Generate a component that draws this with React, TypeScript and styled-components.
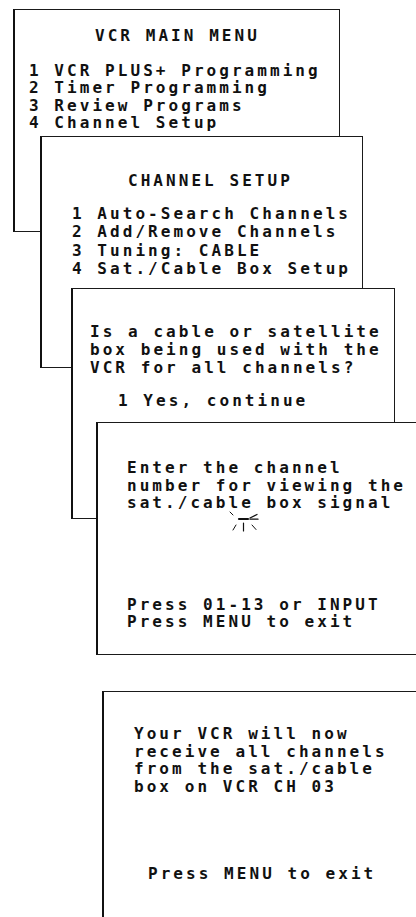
import React from "react";
import styled, { createGlobalStyle } from "styled-components";

const Global = createGlobalStyle`
  html, body { margin: 0; padding: 0; background: #ffffff; }
  body { overflow: hidden; width: 416px; height: 917px; }
`;

const Page = styled.div`
  display: flex;
  flex-direction: column;
  align-items: flex-start;
  width: 416px;
  height: 917px;
  padding-top: 9px;
  box-sizing: border-box;
  overflow: hidden;
  background: #fff;
  font-family: "DejaVu Sans Mono", "Liberation Mono", monospace;
  font-weight: bold;
  font-size: 16px;
  letter-spacing: 3.05px;
  color: #111;
`;

const Screen = styled.section<{
  $left: number;
  $shift: number;
  $w: number;
  $h: number;
  $padTop: number;
  $padLeft: number;
  $lh: number;
}>`
  position: relative;
  z-index: 1;
  flex: none;
  box-sizing: border-box;
  margin-left: ${(p) => p.$left}px;
  margin-top: ${(p) => p.$shift}px;
  width: ${(p) => p.$w}px;
  height: ${(p) => p.$h}px;
  padding: ${(p) => p.$padTop}px 0 0 ${(p) => p.$padLeft}px;
  background: #fff;
  border: 1px solid #1a1a1a;
  border-left: 2px solid #111;
  line-height: ${(p) => p.$lh}px;
  display: flex;
  flex-direction: column;
  align-items: flex-start;
`;

const Title = styled.div<{ $indent: number; $gap: number }>`
  margin-left: ${(p) => p.$indent}px;
  margin-bottom: ${(p) => p.$gap}px;
  white-space: pre;
`;

const Line = styled.div<{ $indent?: number; $gap?: number }>`
  margin-left: ${(p) => p.$indent ?? 0}px;
  margin-top: ${(p) => p.$gap ?? 0}px;
  white-space: pre;
`;

const CursorMark = styled.svg`
  display: block;
  margin-left: 101px;
  margin-top: -4px;
  width: 32px;
  height: 26px;
  flex: none;
`;

const Cursor = () => (
  <CursorMark viewBox="0 0 32 26" fill="none" stroke="#111" strokeLinecap="round">
    <line x1="11" y1="11" x2="20" y2="11" strokeWidth="2.2" />
    <line x1="2" y1="4" x2="5" y2="7" strokeWidth="1" />
    <line x1="22" y1="10" x2="29" y2="6.5" strokeWidth="1.3" />
    <line x1="22" y1="11.2" x2="30" y2="11.2" strokeWidth="1.3" />
    <line x1="8" y1="17" x2="5" y2="22" strokeWidth="1" />
    <line x1="15.5" y1="15" x2="15.5" y2="23" strokeWidth="1.2" />
    <line x1="24" y1="17" x2="28" y2="21.5" strokeWidth="1" />
  </CursorMark>
);

export default function App() {
  return (
    <>
      <Global />
      <Page>
        <Screen $left={13} $shift={0} $w={327} $h={223} $padTop={17} $padLeft={14} $lh={17.3}>
          <Title $indent={66} $gap={17.7}>VCR MAIN MENU</Title>
          <Line>1 VCR PLUS+ Programming</Line>
          <Line>2 Timer Programming</Line>
          <Line>3 Review Programs</Line>
          <Line>4 Channel Setup</Line>
        </Screen>

        <Screen $left={40} $shift={-96} $w={323} $h={232} $padTop={35} $padLeft={30} $lh={18.3}>
          <Title $indent={56} $gap={14.7}>CHANNEL SETUP</Title>
          <Line>1 Auto-Search Channels</Line>
          <Line>2 Add/Remove Channels</Line>
          <Line>3 Tuning: CABLE</Line>
          <Line>4 Sat./Cable Box Setup</Line>
        </Screen>

        <Screen $left={71} $shift={-80} $w={324} $h={231} $padTop={34} $padLeft={17} $lh={18}>
          <Line>Is a cable or satellite</Line>
          <Line>box being used with the</Line>
          <Line>VCR for all channels?</Line>
          <Line $indent={28} $gap={15}>1 Yes, continue</Line>
        </Screen>

        <Screen $left={96} $shift={-97} $w={340} $h={233} $padTop={36} $padLeft={29} $lh={17.5}>
          <Line>Enter the channel</Line>
          <Line>number for viewing the</Line>
          <Line>sat./cable box signal</Line>
          <Cursor />
          <Line $gap={62}>Press 01-13 or INPUT</Line>
          <Line>Press MENU to exit</Line>
        </Screen>

        <Screen $left={102} $shift={36} $w={340} $h={260} $padTop={33} $padLeft={30} $lh={17.6}>
          <Line>Your VCR will now</Line>
          <Line>receive all channels</Line>
          <Line>from the sat./cable</Line>
          <Line>box on VCR CH 03</Line>
          <Line $indent={14} $gap={69.4}>Press MENU to exit</Line>
        </Screen>
      </Page>
    </>
  );
}
